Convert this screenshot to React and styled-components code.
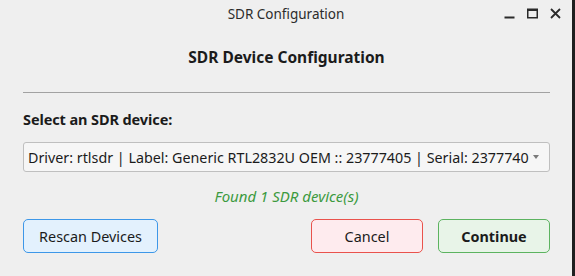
import React, { useState } from "react";
import styled, { createGlobalStyle } from "styled-components";

const GlobalStyle = createGlobalStyle`
  html, body {
    margin: 0;
    padding: 0;
    background: #1f1f1f;
  }
  * {
    box-sizing: border-box;
  }
`;

const FONT = `"Noto Sans", "Open Sans", "DejaVu Sans", sans-serif`;

const Window = styled.div`
  width: 572px;
  height: 276px;
  background: #efefef;
  font-family: ${FONT};
  color: #1b1b1b;
  display: flex;
  flex-direction: column;
`;

const TitleBar = styled.div`
  position: relative;
  height: 27px;
  display: flex;
  align-items: center;
  justify-content: center;
  font-size: 13.5px;
  color: #2c2c2c;
`;

const Controls = styled.div`
  position: absolute;
  right: 11px;
  top: 8px;
  display: flex;
  gap: 12px;
  align-items: center;
`;

const Content = styled.div`
  flex: 1;
  display: flex;
  flex-direction: column;
  padding: 0 22px 0 23px;
`;

const Heading = styled.div`
  margin-top: 20px;
  height: 20px;
  line-height: 20px;
  text-align: center;
  font-weight: 700;
  font-size: 15.5px;
`;

const Separator = styled.div`
  margin-top: 25px;
  height: 1px;
  background: #a2a2a2;
`;

const Label = styled.div`
  margin-top: 17px;
  height: 18px;
  line-height: 18px;
  font-weight: 700;
  font-size: 14.5px;
  letter-spacing: -0.1px;
`;

const Combo = styled.div`
  margin-top: 14px;
  height: 30px;
  border: 1px solid #bfbfbf;
  border-radius: 3px;
  background: #f6f6f6;
  display: flex;
  align-items: center;
  padding: 0 10px 0 4px;
  font-size: 14.3px;
  white-space: nowrap;
  overflow: hidden;
`;

const ComboText = styled.span`
  flex: 1;
  overflow: hidden;
`;

const Arrow = styled.span`
  width: 0;
  height: 0;
  border-left: 3.5px solid transparent;
  border-right: 3.5px solid transparent;
  border-top: 4px solid #7a7a7a;
  margin-left: 4px;
`;

const Status = styled.div`
  margin-top: 15px;
  height: 18px;
  line-height: 18px;
  text-align: center;
  font-style: italic;
  font-size: 15px;
  color: #3c9a40;
`;

const ButtonRow = styled.div`
  margin-top: 14px;
  display: flex;
  align-items: center;
  gap: 15px;
`;

const Spacer = styled.div`
  flex: 1;
`;

const tones = {
  blue: { bg: "#e3f1fd", border: "#3d97e8" },
  red: { bg: "#feebee", border: "#e9524c" },
  green: { bg: "#e8f4e8", border: "#5cb360" },
};

const Button = styled.button`
  height: 34px;
  width: ${(p) => p.$w}px;
  border: 1px solid ${(p) => tones[p.$tone].border};
  background: ${(p) => tones[p.$tone].bg};
  border-radius: 5px;
  font-family: ${FONT};
  font-size: 14.4px;
  font-weight: ${(p) => (p.$bold ? 700 : 400)};
  color: #1b1b1b;
  padding: 0;
  cursor: pointer;
`;

function WindowControls() {
  return (
    <Controls>
      <svg width="11" height="11" viewBox="0 0 11 11">
        <rect x="0.5" y="8.5" width="10" height="2" fill="#2b2b2b" />
      </svg>
      <svg width="11" height="11" viewBox="0 0 11 11">
        <rect x="0.75" y="1.25" width="9.5" height="8.5" fill="none" stroke="#2b2b2b" strokeWidth="1.5" />
        <rect x="0.5" y="1" width="10" height="2" fill="#2b2b2b" />
      </svg>
      <svg width="11" height="11" viewBox="0 0 11 11">
        <path d="M1 1 L10 10 M10 1 L1 10" stroke="#2b2b2b" strokeWidth="1.8" />
      </svg>
    </Controls>
  );
}

export default function App() {
  const [count] = useState(1);
  return (
    <>
      <GlobalStyle />
      <Window>
        <TitleBar>
          SDR Configuration
          <WindowControls />
        </TitleBar>
        <Content>
          <Heading>SDR Device Configuration</Heading>
          <Separator />
          <Label>Select an SDR device:</Label>
          <Combo>
            <ComboText>
              Driver: rtlsdr | Label: Generic RTL2832U OEM :: 23777405 | Serial: 2377740
            </ComboText>
            <Arrow />
          </Combo>
          <Status>Found {count} SDR device(s)</Status>
          <ButtonRow>
            <Button $tone="blue" $w={135}>Rescan Devices</Button>
            <Spacer />
            <Button $tone="red" $w={112}>Cancel</Button>
            <Button $tone="green" $w={112} $bold>Continue</Button>
          </ButtonRow>
        </Content>
      </Window>
    </>
  );
}
